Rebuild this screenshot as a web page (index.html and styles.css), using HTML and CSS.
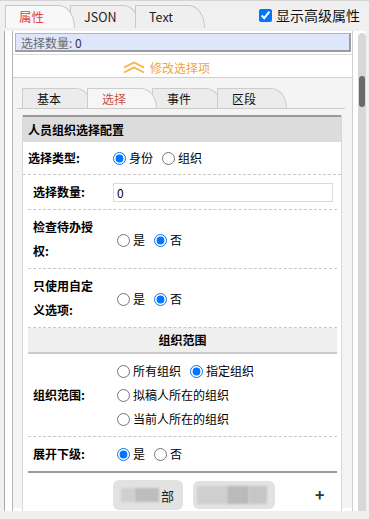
FILE: index.html
```html
<!DOCTYPE html>
<html>
<head>
<meta charset="utf-8">
<link rel="stylesheet" href="styles.css">
</head>
<body>

<div class="topbar">
  <div class="tabs">
    <div class="tab tab-active">属性</div>
    <div class="tab">JSON</div>
    <div class="tab">Text</div>
  </div>
  <label class="advanced"><input type="checkbox" checked> 显示高级属性</label>
</div>

<div class="frame">
  <div class="panel">
    <div class="selected-wrap">
      <div class="selected"><span class="sel-label">选择数量:</span> 0</div>
    </div>
    <div class="modify">
      <svg width="24" height="13" viewBox="0 0 24 13">
        <polyline points="2,6.5 12,1.5 22,6.5" fill="none" stroke="#f8b040" stroke-width="1.6"/>
        <polyline points="2,11.5 12,6.5 22,11.5" fill="none" stroke="#f8b040" stroke-width="1.6"/>
      </svg>
      <span>修改选择项</span>
    </div>

    <div class="inner">
      <div class="subtabs">
        <div class="subtab">基本</div>
        <div class="subtab subtab-active">选择</div>
        <div class="subtab">事件</div>
        <div class="subtab">区段</div>
      </div>

      <div class="form">
        <div class="form-head">人员组织选择配置</div>

        <div class="row row-top">
          <div class="label label-top">选择类型:</div>
          <div class="value value-top">
            <label class="opt"><input type="radio" name="t" checked>身份</label>
            <label class="opt"><input type="radio" name="t">组织</label>
          </div>
        </div>

        <div class="group">
          <div class="row row-input">
            <div class="label">选择数量:</div>
            <div class="value value-input"><input class="text" type="text" value="0"></div>
          </div>

          <div class="row row-tall">
            <div class="label">检查待办授权:</div>
            <div class="value">
              <label class="opt"><input type="radio" name="a">是</label>
              <label class="opt"><input type="radio" name="a" checked>否</label>
            </div>
          </div>

          <div class="row row-tall">
            <div class="label">只使用自定义选项:</div>
            <div class="value">
              <label class="opt"><input type="radio" name="c">是</label>
              <label class="opt"><input type="radio" name="c" checked>否</label>
            </div>
          </div>

          <div class="section">组织范围</div>

          <div class="row row-scope">
            <div class="label">组织范围:</div>
            <div class="value value-list">
              <div class="line">
                <label class="opt"><input type="radio" name="s">所有组织</label>
                <label class="opt"><input type="radio" name="s" checked>指定组织</label>
              </div>
              <div class="line"><label class="opt"><input type="radio" name="s">拟稿人所在的组织</label></div>
              <div class="line"><label class="opt"><input type="radio" name="s">当前人所在的组织</label></div>
            </div>
          </div>

          <div class="row row-last">
            <div class="label">展开下级:</div>
            <div class="value">
              <label class="opt"><input type="radio" name="e" checked>是</label>
              <label class="opt"><input type="radio" name="e">否</label>
            </div>
          </div>

          <div class="actions">
            <div class="btn btn-one"><span class="blur b1"></span><span class="blur b2"></span><span class="btn-text">部</span></div>
            <div class="btn btn-two"><span class="blur b3"></span><span class="blur b4"></span><span class="blur b5"></span></div>
            <div class="plus">+</div>
          </div>
        </div>
      </div>
    </div>
  </div>

  <div class="scrollbar"><div class="thumb"></div></div>
</div>

</body>
</html>
```

FILE: styles.css
```css
body {
  margin: 0;
  width: 369px;
  height: 519px;
  overflow: hidden;
  background-color: #f0f0f0;
  font-family: "Noto Sans CJK SC", "Microsoft YaHei", sans-serif;
  font-size: 12px;
  color: #000;
}

.topbar {
  height: 28px;
  border-top: 1px solid #d4d4d4;
  box-sizing: border-box;
  display: flex;
  align-items: flex-start;
  justify-content: space-between;
  padding-left: 5px;
  padding-top: 4px;
}

.tabs {
  display: flex;
  height: 23px;
}

.tab {
  width: 70px;
  height: 23px;
  box-sizing: border-box;
  margin-right: -5px;
  padding-left: 13px;
  border: 1px solid #c8c8c8;
  border-bottom: none;
  border-top-right-radius: 16px 23px;
  background-color: #efefef;
  line-height: 21px;
  font-size: 12.5px;
  color: #222;
  position: relative;
}

.tab-active {
  background-color: #f8f8f8;
  color: #e0483e;
  z-index: 2;
}

.advanced {
  display: flex;
  align-items: center;
  gap: 3px;
  font-size: 14px;
  padding-right: 9px;
  height: 20px;
  color: #111;
}

.advanced input {
  width: 13px;
  height: 13px;
  margin: 0 1px 0 0;
}

.frame {
  margin-top: 3px;
  margin-left: 4px;
  height: 480px;
  width: 362px;
  box-sizing: border-box;
  border-left: 1px solid #a8a8a8;
  background-color: #fff;
  padding-left: 7px;
  display: flex;
  overflow: hidden;
}

.panel {
  width: 341px;
  flex: none;
  box-sizing: border-box;
  border-left: 1px solid #b4b4b4;
  border-right: 1px solid #d0d0d0;
  background-color: #fff;
}

.selected-wrap {
  padding: 2px 1px 2px 2px;
  border-bottom: 1px solid #dcdcdc;
}

.selected {
  height: 19px;
  box-sizing: border-box;
  background-color: #dee6fb;
  border: 1px solid #b0b4c0;
  border-right: 2px solid #9c9c9c;
  border-bottom: 2px solid #9c9c9c;
  padding-left: 5px;
  line-height: 17px;
  font-size: 12px;
  color: #333;
}

.sel-label {
  color: #6a6a6a;
}

.modify {
  height: 20px;
  border-bottom: 1px solid #cfcfcf;
  display: flex;
  align-items: center;
  padding-left: 109px;
  padding-top: 2px;
  gap: 4px;
  color: #f6a534;
  font-size: 12px;
}

.inner {
  background-color: #f4f4f4;
  padding: 10px 7px 0 4px;
  height: 420px;
}

.subtabs {
  display: flex;
  height: 20px;
  padding-left: 5px;
  border-bottom: 1px solid #cccccc;
}

.subtab {
  width: 70px;
  height: 20px;
  box-sizing: border-box;
  margin-right: -5px;
  padding-left: 14px;
  border: 1px solid #cdcdcd;
  border-bottom: none;
  border-top-right-radius: 16px 20px;
  background-color: #ececec;
  line-height: 19px;
  color: #111;
  position: relative;
}

.subtab-active {
  background-color: #f6f6f6;
  color: #c8524c;
  z-index: 2;
}

.form {
  margin: 6px 3px 0 5px;
  background-color: #fff;
  border-left: 1px solid #d8d8d8;
  border-right: 1px solid #d8d8d8;
  height: 400px;
}

.form-head {
  height: 25px;
  border-top: 2px solid #9a9a9a;
  background-color: #dcdcdc;
  padding-left: 5px;
  line-height: 25px;
  font-weight: bold;
}

.row {
  display: flex;
  align-items: center;
  border-bottom: 1px dashed #c8c8c8;
  box-sizing: border-box;
}

.row-top {
  height: 33px;
  padding-left: 5px;
}

.label {
  width: 65px;
  flex: none;
  padding-left: 5px;
  margin-right: 15px;
  font-weight: bold;
  line-height: 24px;
}

.label-top {
  width: 85px;
  padding-left: 0;
  margin-right: 0;
}

.value {
  display: flex;
  align-items: center;
  padding-left: 4px;
}

.value-top,
.value-input {
  padding-left: 0;
}

.group {
  margin: 0 4px 0 5px;
}

.row-input {
  height: 35px;
}

.text {
  width: 220px;
  height: 19px;
  box-sizing: border-box;
  border: 1px solid #dadada;
  padding: 0 3px;
  font-family: "Noto Sans CJK SC", sans-serif;
  font-size: 12px;
  outline: none;
}

.row-tall {
  height: 59px;
}

.row-tall .value {
  padding-top: 2px;
}

.opt {
  display: inline-flex;
  align-items: center;
  margin-right: 9px;
  line-height: 24px;
}

.opt input {
  width: 13px;
  height: 13px;
  margin: 0 3px 0 0;
}

.section {
  height: 26px;
  box-sizing: border-box;
  background-color: #efefef;
  border-bottom: 2px solid #cccccc;
  text-align: center;
  line-height: 24px;
  font-weight: bold;
}

.row-scope {
  height: 83px;
}

.value-list {
  flex-direction: column;
  align-items: flex-start;
}

.line {
  height: 24px;
  display: flex;
  align-items: center;
}

.row-last {
  height: 36px;
  border-bottom: 2px solid #9c9c9c;
}

.actions {
  display: flex;
  align-items: flex-start;
  padding-top: 7px;
  padding-left: 85px;
}

.btn {
  height: 30px;
  border-radius: 6px;
  background-color: #e2e2e2;
  display: flex;
  align-items: center;
  position: relative;
  overflow: hidden;
}

.btn-one {
  width: 70px;
  margin-right: 10px;
}

.btn-two {
  width: 82px;
  height: 28px;
  margin-top: 1px;
}

.blur {
  height: 14px;
  background-color: #c4c4c4;
  filter: blur(1px);
}

.b1 { width: 14px; margin-left: 8px; background-color: #d0d0d0; }
.b2 { width: 24px; background-color: #bdbdbd; }
.b3 { width: 30px; margin-left: 4px; height: 18px; background-color: #cfcfcf; }
.b4 { width: 22px; height: 18px; background-color: #bababa; }
.b5 { width: 18px; height: 18px; background-color: #c6c6c6; }

.btn-text {
  font-size: 13px;
  margin-left: 2px;
  color: #222;
}

.plus {
  margin-left: 40px;
  margin-top: 2px;
  font-size: 16px;
  font-weight: bold;
  color: #333;
}

.scrollbar {
  width: 8px;
  flex: none;
  margin-left: 5px;
  margin-top: 2px;
  border-radius: 4px 4px 0 0;
  background-color: #d8d8d8;
  position: relative;
}

.thumb {
  margin-top: 43px;
  margin-left: 1px;
  width: 6px;
  height: 31px;
  border-radius: 3px;
  background-color: #6a6a6a;
}
```
